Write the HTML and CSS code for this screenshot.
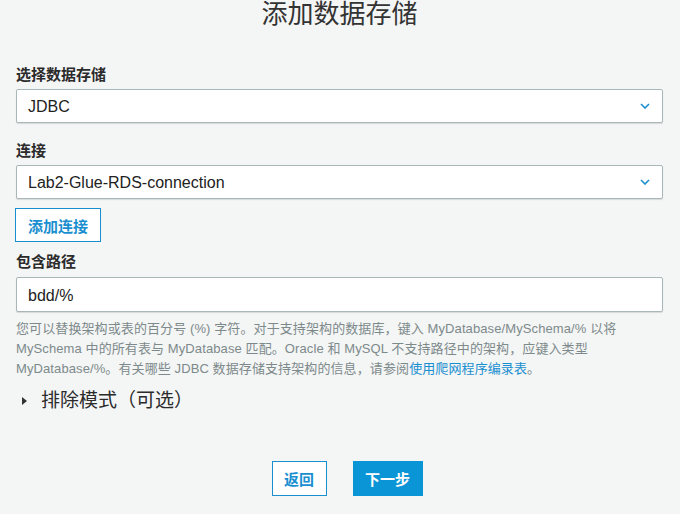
FILE: index.html
```html
<!DOCTYPE html>
<html lang="zh-CN">
<head>
<meta charset="utf-8">
<title>添加数据存储</title>
<link rel="stylesheet" href="styles.css">
</head>
<body>
<div class="page">
  <h1 class="title">添加数据存储</h1>

  <div class="field first">
    <div class="label">选择数据存储</div>
    <div class="select">
      <span class="value">JDBC</span>
      <svg class="chev" width="10" height="6" viewBox="0 0 10 6"><polyline points="1,1 5,5 9,1" fill="none" stroke="#1a8fd0" stroke-width="1.6"/></svg>
    </div>
  </div>

  <div class="field second">
    <div class="label">连接</div>
    <div class="select">
      <span class="value">Lab2-Glue-RDS-connection</span>
      <svg class="chev" width="10" height="6" viewBox="0 0 10 6"><polyline points="1,1 5,5 9,1" fill="none" stroke="#1a8fd0" stroke-width="1.6"/></svg>
    </div>
  </div>

  <button class="btn-outline add">添加连接</button>

  <div class="field third">
    <div class="label">包含路径</div>
    <div class="input"><span class="value">bdd/%</span></div>
  </div>

  <div class="help">
    <span class="line">您可以替换架构或表的百分号 (%) 字符。对于支持架构的数据库，键入 MyDatabase/MySchema/% 以将</span>
    <span class="line">MySchema 中的所有表与 MyDatabase 匹配。Oracle 和 MySQL 不支持路径中的架构，应键入类型</span>
    <span class="line">MyDatabase/%。有关哪些 JDBC 数据存储支持架构的信息，请参阅<a class="link">使用爬网程序编录表</a>。</span>
  </div>

  <div class="exclude">
    <span class="tri"></span>
    <span class="exclude-text">排除模式（可选）</span>
  </div>

  <div class="actions">
    <button class="btn-outline back">返回</button>
    <button class="btn-primary">下一步</button>
  </div>
</div>
</body>
</html>
```
FILE: styles.css
```css
* { box-sizing: border-box; }
html, body {
  margin: 0;
  padding: 0;
  background: #f4f5f5;
}
body {
  font-family: "Liberation Sans", "Noto Sans CJK SC", sans-serif;
  color: #333;
}
.page {
  padding: 0 17px 0 16px;
  display: flex;
  flex-direction: column;
}
.title {
  margin: 0;
  font-size: 26px;
  line-height: 28px;
  font-weight: normal;
  text-align: center;
  color: #333;
}
.field { display: flex; flex-direction: column; gap: 4px; }
.field.first { margin-top: 37px; }
.field.second { margin-top: 18px; }
.field.third { margin-top: 10px; gap: 5px; }
.label {
  font-size: 15px;
  line-height: 20px;
  font-weight: bold;
  color: #2b2b2b;
}
.select, .input {
  height: 34px;
  background: #fff;
  border: 1px solid #aab7b8;
  border-radius: 2px;
  box-shadow: 0 1px 1px rgba(0,0,0,0.12);
  display: flex;
  align-items: center;
  justify-content: space-between;
  padding: 2px 12px 0 11px;
}
.input { height: 35px; }
.value {
  font-size: 16px;
  color: #222;
}
.chev { display: block; margin-top: -2px; }
.btn-outline {
  font-family: inherit;
  background: #fff;
  border: 1px solid #1a8fd0;
  border-radius: 0;
  color: #1a8fd0;
  font-weight: bold;
  font-size: 15px;
  height: 34px;
  padding: 0;
  cursor: pointer;
}
.add {
  margin-top: 9px;
  margin-left: -1px;
  width: 86px;
  align-self: flex-start;
}
.help {
  margin-top: 7px;
  font-size: 13px;
  line-height: 20px;
  color: #7d8a8b;
  display: flex;
  flex-direction: column;
}
.line { white-space: nowrap; letter-spacing: 0.1px; }
.link { color: #1a8fd0; }
.exclude {
  margin-top: 10px;
  display: flex;
  align-items: center;
  height: 24px;
}
.tri {
  width: 0;
  height: 0;
  border-top: 4px solid transparent;
  border-bottom: 4px solid transparent;
  border-left: 5px solid #333;
  margin-left: 6px;
  margin-right: 14px;
}
.exclude-text {
  font-size: 19px;
  line-height: 24px;
  color: #2b2b2b;
}
.actions {
  margin-top: 48px;
  display: flex;
  justify-content: center;
  gap: 26px;
  padding-left: 15px;
}
.back {
  width: 55px;
  height: 35px;
}
.btn-primary {
  font-family: inherit;
  width: 70px;
  height: 35px;
  background: #0a96d6;
  border: none;
  border-radius: 0;
  color: #fff;
  font-weight: bold;
  font-size: 15px;
  padding: 0;
  cursor: pointer;
}
```
